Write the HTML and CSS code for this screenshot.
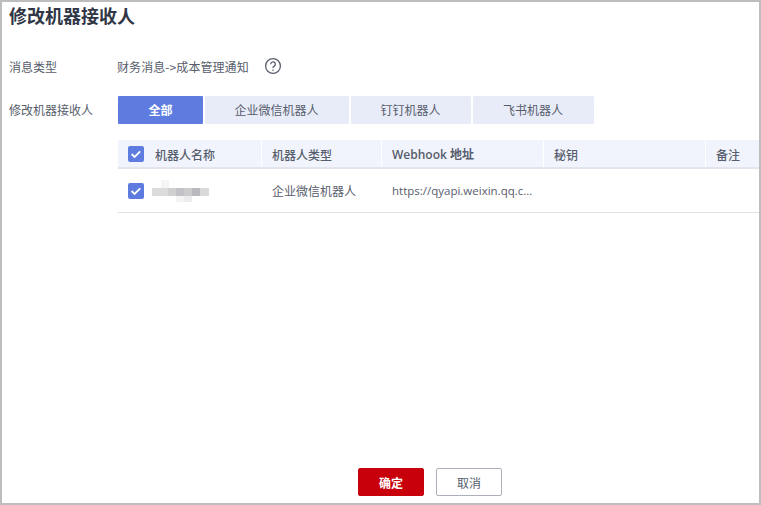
FILE: index.html
```html
<!DOCTYPE html>
<html lang="zh-CN">
<head>
<meta charset="utf-8">
<title>修改机器接收人</title>
<link rel="stylesheet" href="styles.css">
</head>
<body>
<div class="dialog">
  <h1 class="title">修改机器接收人</h1>
  <div class="form-row info-row">
    <span class="label">消息类型</span>
    <span class="value">财务消息-&gt;成本管理通知</span>
    <svg class="help" width="18" height="18" viewBox="0 0 18 18" fill="none" stroke="#5a5f6e">
      <circle cx="9" cy="9" r="7.4" stroke-width="1.3"/>
      <path d="M6.7 7.2a2.3 2.3 0 1 1 3.6 1.9c-.8.5-1.3 1-1.3 1.9" stroke-width="1.3"/>
      <path d="M9 12.4v1.3" stroke-width="1.4"/>
    </svg>
  </div>
  <div class="form-row tabs-row">
    <span class="label label-tabs">修改机器接收人</span>
    <div class="tabs">
      <span class="tab tab-all active">全部</span>
      <span class="tab tab-wecom">企业微信机器人</span>
      <span class="tab tab-ding">钉钉机器人</span>
      <span class="tab tab-feishu">飞书机器人</span>
    </div>
  </div>
  <div class="table">
    <div class="tr thead">
      <div class="td col-name">
        <span class="check"><svg width="16" height="16" viewBox="0 0 16 16"><path d="M3.6 8l3 3 5.6-5.6" fill="none" stroke="#fff" stroke-width="1.8"/></svg></span>
        <span>机器人名称</span>
      </div>
      <div class="td col-type">机器人类型</div>
      <div class="td col-hook hook-head">Webhook 地址</div>
      <div class="td col-key">秘钥</div>
      <div class="td col-note">备注</div>
    </div>
    <div class="tr tbody">
      <div class="td col-name">
        <span class="check"><svg width="16" height="16" viewBox="0 0 16 16"><path d="M3.6 8l3 3 5.6-5.6" fill="none" stroke="#fff" stroke-width="1.8"/></svg></span>
        <svg class="mosaic" width="57" height="22" viewBox="0 0 57 22">
          <rect x="9" y="0" width="8" height="8" fill="#f5f5f6"/>
          <rect x="0" y="8" width="16" height="8" fill="#dcdcdf"/>
          <rect x="16" y="8" width="8" height="8" fill="#d0d0d3"/>
          <rect x="24" y="8" width="8" height="8" fill="#c3c3c7"/>
          <rect x="32" y="8" width="8" height="8" fill="#cbcbce"/>
          <rect x="40" y="8" width="8" height="8" fill="#b9b9bd"/>
          <rect x="48" y="8" width="9" height="8" fill="#d9d9dc"/>
          <rect x="24" y="16" width="8" height="6" fill="#f4f4f5"/>
          <rect x="32" y="16" width="8" height="6" fill="#ececee"/>
        </svg>
      </div>
      <div class="td col-type">企业微信机器人</div>
      <div class="td col-hook url">https://qyapi.weixin.qq.c...</div>
      <div class="td col-key"></div>
      <div class="td col-note"></div>
    </div>
  </div>
  <div class="actions">
    <button class="btn primary" type="button">确定</button>
    <button class="btn" type="button">取消</button>
  </div>
</div>
</body>
</html>
```
FILE: styles.css
```css
* { box-sizing: border-box; }
html, body { margin: 0; padding: 0; }
body {
  width: 761px;
  height: 505px;
  overflow: hidden;
  font-family: "Noto Sans CJK SC", "Open Sans", sans-serif;
  font-size: 12px;
  color: #575d6c;
  background: #fff;
}
.dialog {
  width: 761px;
  height: 505px;
  border: 2px solid #bdbdbd;
  padding: 0 0 0 7px;
  display: flex;
  flex-direction: column;
}
.title {
  margin: 0;
  height: 26px;
  line-height: 26px;
  font-size: 18px;
  font-weight: 700;
  color: #303645;
}
.form-row { display: flex; align-items: center; }
.info-row { margin-top: 27px; height: 22px; }
.tabs-row { margin-top: 19px; height: 28px; }
.label { width: 108px; margin-right: 1px; flex: none; }
.label-tabs { padding-bottom: 2px; }
.value { margin-left: -1px; letter-spacing: 0.08px; }
.help { margin-left: 15px; }
.tabs { display: flex; gap: 2px; }
.tab {
  height: 28px;
  line-height: 28px;
  text-align: center;
  background: #e8ecf8;
  color: #575d6c;
  border-radius: 1px;
  padding-right: 1px;
}
.tab-all { width: 85px; padding-right: 0; }
.tab-wecom { width: 144px; }
.tab-ding { width: 120px; }
.tab-feishu { width: 121px; }
.tab.active { background: #5e7ce0; color: #fff; font-weight: 700; }
.table { margin: 16px 0 0 109px; width: 641px; }
.tr { display: flex; }
.thead {
  height: 29px;
  background: #f1f4fd;
  border-bottom: 2px solid #e3e5ec;
  font-weight: 500;
}
.tbody { height: 44px; border-bottom: 1px solid #dfe1e8; }
.td {
  display: flex;
  align-items: center;
  padding-left: 10px;
  white-space: nowrap;
  overflow: hidden;
}
.thead .td { border-right: 1px solid #fff; height: 27px; padding-top: 1px; }
.col-name { width: 144px; }
.col-type { width: 120px; }
.col-hook { width: 162px; font-family: "Open Sans", "Noto Sans CJK SC", sans-serif; }
.hook-head { font-weight: 600; }
.col-key { width: 162px; }
.col-note { width: 53px; }
.thead .col-note { border-right: 0; }
.check {
  width: 16px;
  height: 16px;
  flex: none;
  background: #5e7ce0;
  border-radius: 2px;
  display: block;
  margin-right: 11px;
}
.check svg { display: block; }
.tbody .check { margin-right: 8px; }
.tbody .col-name { padding-top: 1px; }
.mosaic { display: block; }
.url { font-size: 11.5px; }
.actions {
  margin-top: auto;
  height: 35px;
  display: flex;
  gap: 12px;
  padding-left: 349px;
}
.btn {
  width: 66px;
  height: 28px;
  padding: 0;
  font: inherit;
  color: #575d6c;
  background: #fff;
  border: 1px solid #adb0b8;
  border-radius: 2px;
}
.btn.primary {
  background: #c7000b;
  border-color: #c7000b;
  color: #fff;
  font-weight: 700;
}
```
